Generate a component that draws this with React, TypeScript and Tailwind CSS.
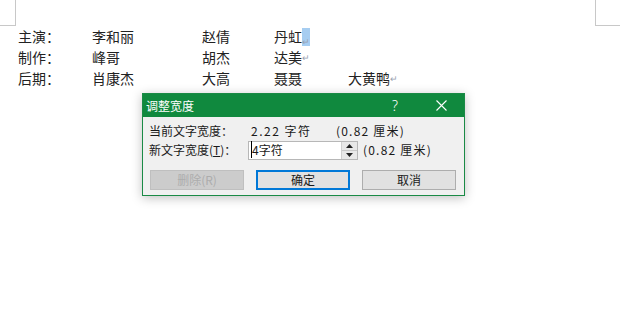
import React from 'react';

const rows = [
    ['主演：', '李和丽', '赵倩', '丹虹', ''],
    ['制作：', '峰哥', '胡杰', '达美', ''],
    ['后期：', '肖康杰', '大高', '聂聂', '大黄鸭'],
];

const Mark = () => <span className="text-[9px] text-gray-400 leading-none">↵</span>;

const App: React.FC = () => {
    return (
        <div
            className="relative w-[620px] h-[309px] bg-white overflow-hidden"
            style={{ fontFamily: '"Noto Sans CJK SC", sans-serif' }}
        >
            {/* page corner marks */}
            <div className="absolute left-0 top-0 w-[16px] h-[26px] border-r border-b border-[#c8c8c8]" />
            <div className="absolute left-[595px] top-0 w-[25px] h-[26px] border-l border-b border-[#c8c8c8]" />

            {/* document text */}
            <div className="pt-[26px] pl-[18px] text-[14px] leading-[21px] text-[#222]">
                {rows.map((r, i) => (
                    <div key={i} className="flex">
                        <div className="w-[74px]">{r[0]}</div>
                        <div className="w-[110px]">{r[1]}</div>
                        <div className="w-[72px]">{r[2]}</div>
                        <div className="w-[74px] flex items-center">
                            {r[3]}
                            {i === 0 && (
                                <span className="bg-[#a6cdf1] h-[18px] w-[8px] flex items-end">
                                    <Mark />
                                </span>
                            )}
                            {i === 1 && <Mark />}
                        </div>
                        {r[4] && (
                            <div className="flex items-center">
                                {r[4]}
                                <Mark />
                            </div>
                        )}
                    </div>
                ))}
            </div>

            {/* dialog */}
            <div
                className="absolute left-[142px] top-[93px] w-[323px] h-[103px] border border-[#1a8a45] bg-[#f0f0f0] shadow-[0_2px_10px_rgba(0,0,0,0.25)] text-[12px] text-[#1a1a1a]"
                style={{ fontFamily: '"Noto Sans CJK SC", sans-serif' }}
            >
                <div className="h-[23px] bg-[#10893e] flex items-center text-white">
                    <span className="pl-[3px] flex-1 leading-none">调整宽度</span>
                    <span className="w-[46px] text-center text-[14px] leading-none font-light" style={{ fontFamily: '"Noto Sans", sans-serif' }}>?</span>
                    <span className="w-[46px] flex justify-center">
                        <svg width="11" height="11" viewBox="0 0 11 11">
                            <path d="M0.5 0.5 L10.5 10.5 M10.5 0.5 L0.5 10.5" stroke="#fff" strokeWidth="1.1" />
                        </svg>
                    </span>
                </div>

                <div className="pl-[6px] pt-[5px]">
                    <div className="flex items-center h-[17px]">
                        <span className="w-[102px]">当前文字宽度：</span>
                        <span className="w-[85px] tracking-[1.5px]">2.22 字符</span>
                        <span className="tracking-[1.2px]">(0.82 厘米)</span>
                    </div>
                    <div className="flex items-center h-[20px] mt-[1px]">
                        <span className="w-[99px]">新文字宽度(<span className="underline">T</span>)：</span>
                        <div className="w-[110px] h-[19px] border border-[#b7b7b7] bg-white flex items-center">
                            <span className="flex-1 pl-[2px] leading-none">
                                <span className="border-l border-black">4</span>字符
                            </span>
                            <div className="w-[16px] h-[17px] flex flex-col border-l border-[#d0d0d0]">
                                <div className="flex-1 bg-[#e8e8e8] border-b border-[#c8c8c8] flex items-center justify-center">
                                    <svg width="7" height="4" viewBox="0 0 7 4"><path d="M0 4 L3.5 0 L7 4 Z" fill="#222" /></svg>
                                </div>
                                <div className="flex-1 bg-[#e8e8e8] flex items-center justify-center">
                                    <svg width="7" height="4" viewBox="0 0 7 4"><path d="M0 0 L3.5 4 L7 0 Z" fill="#222" /></svg>
                                </div>
                            </div>
                        </div>
                        <span className="pl-[5px] tracking-[1.2px]">(0.82 厘米)</span>
                    </div>

                    <div className="flex mt-[10px] gap-[12px] pl-[1px]">
                        <div className="w-[94px] h-[20px] border border-[#bfbfbf] bg-[#cccccc] text-[#acacac] flex items-center justify-center">
                            删除(R)
                        </div>
                        <div className="w-[94px] h-[20px] border-2 border-[#0078d7] bg-[#e1e1e1] flex items-center justify-center">
                            确定
                        </div>
                        <div className="w-[94px] h-[20px] border border-[#adadad] bg-[#e1e1e1] flex items-center justify-center">
                            取消
                        </div>
                    </div>
                </div>
            </div>
        </div>
    );
};

export default App;
